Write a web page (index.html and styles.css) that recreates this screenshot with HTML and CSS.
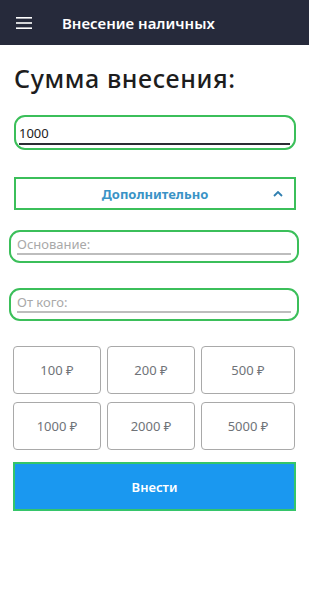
FILE: index.html
```html
<!DOCTYPE html>
<html lang="ru">
<head>
    <meta charset="UTF-8">
    <meta name="viewport" content="width=device-width, initial-scale=1.0">
    <title>Внесение наличных</title>
    <link rel="stylesheet" href="styles.css">
</head>
<body>
    <header class="topbar">
        <svg class="menu-icon" width="16" height="12" viewBox="0 0 16 12">
            <rect x="0" y="0" width="16" height="1.6" fill="#fff"/>
            <rect x="0" y="5.2" width="16" height="1.6" fill="#fff"/>
            <rect x="0" y="10.4" width="16" height="1.6" fill="#fff"/>
        </svg>
        <span class="topbar-title">Внесение наличных</span>
    </header>

    <main class="content">
        <h1>Сумма внесения:</h1>

        <div class="field field-amount">
            <input type="text" value="1000">
        </div>

        <div class="more">
            <span>Дополнительно</span>
            <svg class="chevron" width="10" height="6" viewBox="0 0 10 6">
                <path d="M1 5 L5 1 L9 5" fill="none" stroke="#2f7fb0" stroke-width="1.8"/>
            </svg>
        </div>

        <div class="field field-wide">
            <input type="text" placeholder="Основание:">
        </div>

        <div class="field field-wide">
            <input type="text" placeholder="От кого:">
        </div>

        <div class="amounts">
            <button class="amount">100 ₽</button>
            <button class="amount">200 ₽</button>
            <button class="amount">500 ₽</button>
            <button class="amount">1000 ₽</button>
            <button class="amount">2000 ₽</button>
            <button class="amount">5000 ₽</button>
        </div>

        <button class="submit">Внести</button>
    </main>
</body>
</html>
```

FILE: styles.css
```css
body {
    margin: 0;
    font-family: "Noto Sans", "Open Sans", sans-serif;
    background: #fff;
    color: #222;
}

.topbar {
    height: 45px;
    background-color: #262a3b;
    display: flex;
    align-items: center;
    padding-left: 16px;
}

.topbar-title {
    color: #fff;
    font-size: 15px;
    font-weight: 600;
    margin-left: 30px;
}

.content {
    padding: 0 13px;
}

h1 {
    font-size: 25px;
    font-weight: 500;
    letter-spacing: 0.6px;
    margin: 16px 0 0 1px;
    line-height: 34px;
    color: #1d1d1d;
}

.field {
    border: 2px solid #3bbf5a;
    border-radius: 11px;
    padding: 0 4px 0 3px;
    box-sizing: border-box;
}

.field input {
    display: block;
    width: 100%;
    box-sizing: border-box;
    border: none;
    outline: none;
    background: transparent;
    font-family: inherit;
    font-size: 13px;
    padding: 0;
    height: 20px;
    color: #222;
}

.field input::placeholder {
    color: #a9a9a9;
}

.field-amount {
    margin: 20px 0 0 1px;
    height: 35px;
    padding-top: 6px;
}

.field-amount input {
    border-bottom: 2px solid #2b2b33;
    height: 22px;
}

.field-wide {
    margin: 0 -3px 0 -4px;
    height: 33px;
    padding: 2px 6px 0 6px;
}

.field-wide input {
    border-bottom: 2px solid #bdbdbd;
    height: 21px;
}

.more {
    margin: 27px 0 20px 1px;
    height: 33px;
    border: 2px solid #3bbf5a;
    box-sizing: border-box;
    display: flex;
    align-items: center;
    justify-content: center;
    position: relative;
    color: #3a93c6;
    font-size: 13px;
    font-weight: 700;
}

.chevron {
    position: absolute;
    right: 11px;
    top: 12px;
}

.field-wide + .field-wide {
    margin-top: 25px;
}

.amounts {
    display: grid;
    grid-template-columns: 88px 88px 94px;
    grid-auto-rows: 48px;
    column-gap: 6px;
    row-gap: 8px;
    margin-top: 25px;
}

.amount {
    background: #fff;
    border: 1px solid #a9a9a9;
    border-radius: 4px;
    font-family: inherit;
    font-size: 13px;
    color: #6f7378;
    cursor: pointer;
}

.submit {
    display: block;
    width: 100%;
    height: 49px;
    margin-top: 12px;
    background-color: #1a98f0;
    border: 2px solid #35c56a;
    color: #fff;
    font-family: inherit;
    font-size: 13px;
    font-weight: 600;
    cursor: pointer;
}
```
